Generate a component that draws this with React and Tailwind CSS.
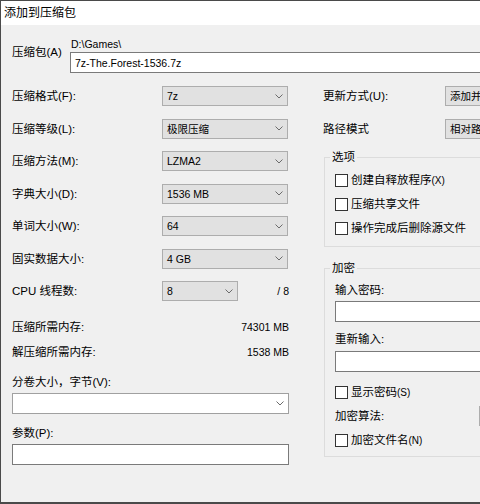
import React from 'react';

// 7-Zip style "add to archive" dialog, cut off at the right edge

function Chevron() {
    return (
        <svg width="8" height="5" viewBox="0 0 8 5" className="shrink-0">
            <polyline points="0.5,0.5 4,4 7.5,0.5" fill="none" stroke="#6b6b6b" strokeWidth="1" />
        </svg>
    );
}

function Combo({ value, width = 'w-[126px]' }) {
    return (
        <div className={`${width} h-[20px] shrink-0 border border-[#adadad] bg-[#e1e1e1] flex items-center justify-between pl-[4px] pr-[4px] overflow-hidden`}>
            <span className="text-[10.5px] whitespace-nowrap">{value}</span>
            <Chevron />
        </div>
    );
}

function Box() {
    return <span className="w-[13px] h-[13px] shrink-0 border border-[#333333] bg-white" />;
}

function Check({ text, hot }) {
    return (
        <div className="h-[24px] flex items-center gap-[3px]">
            <Box />
            <span>
                {text}
                {hot && <span className="text-[10px]">{hot}</span>}
            </span>
        </div>
    );
}

function Row({ label, labelWidth = 'w-[150px]', children }) {
    return (
        <div className="h-[32.5px] flex items-center">
            <span className={`${labelWidth} shrink-0`}>{label}</span>
            {children}
        </div>
    );
}

export default function App() {
    return (
        <div className="w-[480px] h-[504px] overflow-hidden bg-[#f0f0f0] border-t border-l border-b-2 border-[#4a4a4a] font-['Liberation_Sans','Noto_Sans_CJK_SC',sans-serif] text-[11.5px] leading-[16px] text-black">
            {/* Title bar */}
            <div className="h-[24px] bg-white flex items-center pl-[3px] text-[12px]">添加到压缩包</div>

            <div className="pl-[11px]">
                {/* Archive path */}
                <div className="flex mt-[11px]">
                    <span className="w-[58px] shrink-0 pt-[8px]">压缩包(A)</span>
                    <div className="flex flex-col">
                        <span className="pl-[1px] text-[10.5px]">D:\Games\</span>
                        <div className="w-[440px] h-[21px] border border-[#7a7a7a] bg-white flex items-center pl-[4px] text-[10.5px]">
                            7z-The.Forest-1536.7z
                        </div>
                    </div>
                </div>

                <div className="flex mt-[7px]">
                    {/* Left column */}
                    <div className="w-[277px] shrink-0 flex flex-col">
                        <Row label="压缩格式(F):"><Combo value="7z" /></Row>
                        <Row label="压缩等级(L):"><Combo value="极限压缩" /></Row>
                        <Row label="压缩方法(M):"><Combo value="LZMA2" /></Row>
                        <Row label="字典大小(D):"><Combo value="1536 MB" /></Row>
                        <Row label="单词大小(W):"><Combo value="64" /></Row>
                        <Row label="固实数据大小:"><Combo value="4 GB" /></Row>
                        <Row label="CPU 线程数:">
                            <Combo value="8" width="w-[76px]" />
                            <span className="ml-auto text-[10.5px]">/ 8</span>
                        </Row>

                        <div className="mt-[7px] h-[25px] flex items-center justify-between">
                            <span>压缩所需内存:</span>
                            <span className="text-[10.5px]">74301 MB</span>
                        </div>
                        <div className="h-[25px] flex items-center justify-between">
                            <span>解压缩所需内存:</span>
                            <span className="text-[10.5px]">1538 MB</span>
                        </div>

                        <span className="mt-[9.5px]">分卷大小，字节(V):</span>
                        <div className="mt-[3px] h-[21px] border border-[#a0a0a0] bg-white flex items-center justify-end pr-[4px]">
                            <Chevron />
                        </div>

                        <span className="mt-[11px]">参数(P):</span>
                        <div className="mt-[3px] h-[21px] border border-[#7a7a7a] bg-white" />
                    </div>

                    {/* Right column */}
                    <div className="ml-[34px] w-[200px] shrink-0 flex flex-col">
                        <Row label="更新方式(U):" labelWidth="w-[122px]"><Combo value="添加并替换文件" width="w-[122px]" /></Row>
                        <Row label="路径模式" labelWidth="w-[122px]"><Combo value="相对路径" width="w-[122px]" /></Row>

                        <fieldset className="mt-[4px] ml-[1px] border border-[#dcdcdc] pl-[10px] pb-[6px]">
                            <legend className="-ml-[5px] px-[2px]">选项</legend>
                            <div className="pt-[3px]">
                                <Check text="创建自释放程序" hot="(X)" />
                                <Check text="压缩共享文件" />
                                <Check text="操作完成后删除源文件" />
                            </div>
                        </fieldset>

                        <fieldset className="mt-[13px] ml-[1px] border border-[#dcdcdc] pl-[10px] pb-[4px]">
                            <legend className="-ml-[5px] px-[2px]">加密</legend>
                            <span className="block mt-[6px]">输入密码:</span>
                            <div className="mt-[3px] h-[21px] border border-[#7a7a7a] bg-white" />
                            <span className="block mt-[9px]">重新输入:</span>
                            <div className="mt-[4px] h-[21px] border border-[#7a7a7a] bg-white" />
                            <div className="mt-[8px]">
                                <Check text="显示密码" hot="(S)" />
                            </div>
                            <div className="h-[24px] flex items-center">
                                <span className="w-[144px] shrink-0">加密算法:</span>
                                <Combo value="AES-256" width="w-[80px]" />
                            </div>
                            <Check text="加密文件名" hot="(N)" />
                        </fieldset>
                    </div>
                </div>
            </div>
        </div>
    );
}
